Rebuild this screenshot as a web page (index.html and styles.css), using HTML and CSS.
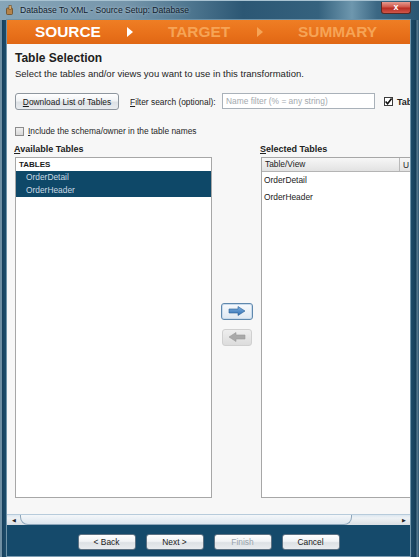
FILE: index.html
```html
<!DOCTYPE html>
<html>
<head>
<meta charset="utf-8">
<title>Database To XML - Source Setup: Database</title>
<link rel="stylesheet" href="styles.css">
</head>
<body>
<div class="window">
  <div class="titlebar">
    <svg class="appicon" width="8" height="10" viewBox="0 0 8 10"><rect x="0.5" y="3" width="6" height="6.5" rx="1" fill="#b5834a" stroke="#6b4a22" stroke-width="0.8"/><rect x="3" y="0.5" width="2.2" height="4" fill="#e0b070" stroke="#6b4a22" stroke-width="0.6"/></svg>
    <span class="title">Database To XML - Source Setup: Database</span>
    <span class="close">x</span>
  </div>
  <div class="client">
    <div class="banner">
      <span class="step s1 active">SOURCE</span>
      <span class="sep active"></span>
      <span class="step s2">TARGET</span>
      <span class="sep"></span>
      <span class="step">SUMMARY</span>
    </div>
    <div class="panel">
      <h1 class="heading">Table Selection</h1>
      <p class="sub">Select the tables and/or views you want to use in this transformation.</p>
      <div class="controls">
        <span class="btn dl"><u>D</u>ownload List of Tables</span>
        <span class="flabel"><u>F</u>ilter search (optional):</span>
        <span class="input">Name filter (% = any string)</span>
        <span class="cb checked"><svg width="9" height="9" viewBox="0 0 9 9"><path d="M1.6 4.4 L3.6 6.8 L7.6 1.4" fill="none" stroke="#111" stroke-width="1.6"/></svg></span>
        <span class="cblabel">Tables</span>
      </div>
      <div class="schema">
        <span class="cb"></span>
        <span class="cblabel"><u>I</u>nclude the schema/owner in the table names</span>
      </div>
      <div class="lists">
        <div class="col">
          <div class="lhead"><u>A</u>vailable Tables</div>
          <div class="listbox">
            <div class="thead">TABLES</div>
            <div class="lrow sel">OrderDetail</div>
            <div class="lrow sel">OrderHeader</div>
          </div>
        </div>
        <div class="mid">
          <span class="abtn on"><svg width="18" height="10" viewBox="0 0 18 10"><defs><linearGradient id="ga" x1="0" y1="0" x2="0" y2="1"><stop offset="0" stop-color="#7fb0e0"/><stop offset="1" stop-color="#2f6fb3"/></linearGradient></defs><path d="M1 3 H10 V0.5 L17 5 L10 9.5 V7 H1 Z" fill="url(#ga)" stroke="#2a5f96" stroke-width="0.6"/></svg></span>
          <span class="abtn off"><svg width="18" height="10" viewBox="0 0 18 10"><path d="M17 3 H8 V0.5 L1 5 L8 9.5 V7 H17 Z" fill="#a9a9a9" stroke="#9a9a9a" stroke-width="0.6"/></svg></span>
        </div>
        <div class="col">
          <div class="lhead"><u>S</u>elected Tables</div>
          <div class="listbox right">
            <div class="rhead"><span class="c1">Table/View</span><span class="c2">U</span></div>
            <div class="rrow">OrderDetail</div>
            <div class="rrow">OrderHeader</div>
          </div>
        </div>
      </div>
    </div>
    <div class="hscroll">
      <span class="sarrow">&#9664;</span>
      <span class="thumb"></span>
      <span class="track"></span>
      <span class="sarrow">&#9654;</span>
    </div>
    <div class="buttonbar">
      <span class="btn nav">&lt; Back</span>
      <span class="btn nav">Next &gt;</span>
      <span class="btn nav disabled">Finish</span>
      <span class="btn nav">Cancel</span>
    </div>
  </div>
</div>
</body>
</html>
```

FILE: styles.css
```css
* { box-sizing: border-box; }
html, body { margin: 0; padding: 0; }
body {
  width: 419px;
  height: 557px;
  overflow: hidden;
  font-family: "Liberation Sans", Arial, sans-serif;
  background: #1b4a68;
  color: #1a1a1a;
}
.window {
  width: 419px;
  height: 557px;
  display: flex;
  flex-direction: column;
  background: linear-gradient(90deg, #6f8fa3 0, #6f8fa3 2px, #173f5b 2px, #1c4b69 5px, #1c4b69 411px, #163e59 416px, #5e8196 417px, #2c5470 419px);
}
.titlebar {
  height: 20px;
  flex: none;
  display: flex;
  align-items: center;
  padding-left: 6px;
  background: linear-gradient(90deg, #86a5b8 0%, #7696ab 30%, #4f7790 45%, #2c5774 58%, #35627e 76%, #6e97ae 84%, #3b6783 90%, #2a5572 100%);
  box-shadow: inset 0 1px 0 #a9c3d2;
}
.appicon { flex: none; margin-right: 6px; }
.title {
  font-size: 8.6px;
  color: #10202c;
  white-space: nowrap;
  text-shadow: 0 0 3px rgba(230,240,245,0.7);
}
.close {
  margin-left: auto;
  margin-right: 8px;
  margin-top: -5px;
  width: 30px;
  height: 12px;
  border: 1px solid #5a2a26;
  border-top: none;
  border-radius: 0 0 3px 3px;
  background: linear-gradient(180deg, #e59b90 0%, #d0574a 45%, #b82d22 55%, #d0574a 100%);
  color: #fff;
  font-size: 9px;
  font-weight: bold;
  line-height: 11px;
  text-align: center;
}
.client {
  flex: 1;
  display: flex;
  flex-direction: column;
  margin: 0 9px 0 7px;
  box-shadow: 0 0 0 1px #6f93a8;
  min-height: 0;
}
.banner {
  height: 24px;
  flex: none;
  display: flex;
  align-items: center;
  padding-left: 28px;
  background: linear-gradient(180deg, #ef7e24 0%, #e8701a 60%, #e06714 100%);
  font-weight: bold;
  font-size: 15.4px;
  color: #f6a456;
  white-space: nowrap;
}
.step.active { color: #ffffff; }
.step.s1 { width: 92px; }
.step.s2 { width: 89px; }
.sep {
  width: 41px;
  height: 11px;
  display: flex;
}
.sep::before {
  content: "";
  width: 0;
  height: 0;
  border-top: 5.5px solid transparent;
  border-bottom: 5.5px solid transparent;
  border-left: 6px solid #f6a456;
}
.sep.active::before { border-left-color: #ffffff; }
.panel {
  flex: 1;
  display: flex;
  flex-direction: column;
  padding: 7px 0 16px 8px;
  background: #f7f7f7;
  overflow: hidden;
  min-height: 0;
}
.heading {
  margin: 0;
  font-size: 12px;
  line-height: 14px;
  font-weight: bold;
  color: #202020;
}
.sub {
  margin: 3px 0 0 0;
  font-size: 9.5px;
  line-height: 12px;
  color: #1e1e1e;
  white-space: nowrap;
}
.controls {
  margin-top: 13px;
  height: 17px;
  display: flex;
  align-items: center;
  white-space: nowrap;
  font-size: 8.4px;
}
.btn {
  display: flex;
  align-items: center;
  justify-content: center;
  flex: none;
  border: 1px solid #8e969e;
  border-radius: 3px;
  background: linear-gradient(180deg, #ffffff 0%, #f1f3f5 45%, #dde1e5 55%, #e9ecef 100%);
  color: #1a1a1a;
  font-size: 8.4px;
  white-space: nowrap;
}
.btn.dl { width: 104px; height: 17px; }
.flabel { width: 92px; margin-left: 11px; flex: none; color: #222; }
.input {
  flex: none;
  width: 153px;
  height: 16px;
  margin-top: -1px;
  border: 1px solid #a9b1b9;
  background: #fff;
  color: #a3a9ae;
  padding-left: 3px;
  display: flex;
  align-items: center;
  font-size: 8.4px;
}
.cb {
  flex: none;
  width: 9px;
  height: 9px;
  border: 1px solid #8c8c8c;
  background: linear-gradient(180deg, #f0f0f0, #d8d8d8);
  display: flex;
}
.cb.checked {
  margin-left: 9px;
  border-color: #3c3c3c;
  background: #fff;
}
.cb svg { margin: -1px; }
.cblabel {
  margin-left: 4px;
  font-size: 8.4px;
  white-space: nowrap;
  color: #1f1f1f;
}
.controls .cblabel { font-size: 9px; font-weight: bold; }
.schema {
  margin-top: 16px;
  height: 10px;
  display: flex;
  align-items: center;
}
.lists {
  margin-top: 8px;
  flex: 1;
  display: grid;
  grid-template-columns: 197px 49px 1fr;
  min-height: 0;
}
.col {
  display: flex;
  flex-direction: column;
  min-height: 0;
}
.lhead {
  font-size: 9px;
  line-height: 11px;
  font-weight: bold;
  color: #222;
  margin-bottom: 2px;
  margin-left: -1px;
  white-space: nowrap;
}
.listbox {
  flex: 1;
  background: #fff;
  border: 1px solid #a7a7a7;
  font-size: 8.4px;
}
.listbox.right { border-right: none; margin-right: -2px; }
.thead {
  height: 13px;
  line-height: 13px;
  padding-left: 3px;
  font-weight: bold;
  font-size: 8px;
  color: #1b1b1b;
}
.lrow {
  height: 13px;
  line-height: 13px;
  padding-left: 10px;
}
.lrow.sel {
  background: #0e4868;
  color: #c9d9e3;
}
.mid {
  display: flex;
  flex-direction: column;
  align-items: center;
  justify-content: center;
  gap: 9px;
  padding-top: 6px;
  padding-left: 1px;
}
.abtn {
  width: 32px;
  height: 17px;
  border-radius: 3px;
  display: flex;
  align-items: center;
  justify-content: center;
}
.abtn.on {
  border: 1px solid #5f88ad;
  background: linear-gradient(180deg, #f7fafd, #dfe8f1);
  box-shadow: inset 0 0 0 1px #c9dbec;
}
.abtn.off {
  width: 30px;
  border: 1px solid #d0d0d0;
  background: linear-gradient(180deg, #eeeeee, #dcdcdc);
}
.rhead {
  height: 14px;
  display: flex;
  align-items: center;
  background: linear-gradient(180deg, #f7f7f7, #e2e2e2);
  border-bottom: 1px solid #b4b4b4;
  color: #222;
}
.rhead .c1 { width: 138px; padding-left: 3px; border-right: 1px solid #b9b9b9; height: 13px; line-height: 13px; }
.rhead .c2 { padding-left: 3px; }
.rrow {
  height: 17px;
  line-height: 17px;
  padding-left: 2px;
  color: #222;
}
.hscroll {
  flex: none;
  height: 11px;
  display: flex;
  align-items: center;
  background: linear-gradient(180deg, #dce7f0 0%, #eef2f5 30%, #d9dee3 100%);
  border-top: 1px solid #b7cbdb;
}
.sarrow {
  flex: none;
  width: 13px;
  font-size: 5px;
  text-align: center;
  color: #222;
}
.thumb {
  flex: none;
  width: 332px;
  height: 10px;
  border: 1px solid #8ea6ba;
  border-top: none;
  border-radius: 0 0 8px 8px;
  background: linear-gradient(180deg, #f4f7fa, #dde6ee);
}
.track { flex: 1; }
.buttonbar {
  flex: none;
  height: 32px;
  display: flex;
  align-items: center;
  justify-content: center;
  gap: 10px;
  padding-top: 2px;
  background: #154a6b;
  border-bottom: 1px solid #7d9db2;
}
.btn.nav { width: 58px; height: 16px; border-color: #5e7283; }
.btn.disabled { color: #9aa4ad; }
```
